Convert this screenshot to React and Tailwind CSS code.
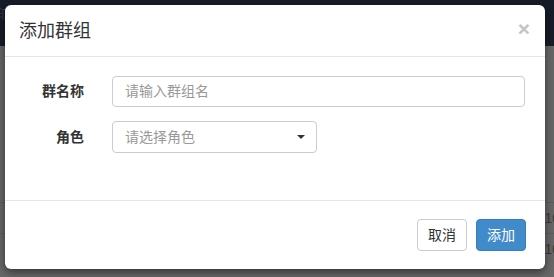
export default function App() {
  const font = { fontFamily: '"Helvetica Neue", "Liberation Sans", "Noto Sans CJK SC", sans-serif' }

  return (
    <div className="relative w-[554px] h-[277px] overflow-hidden bg-[#676767]" style={font}>
      {/* Page behind the backdrop */}
      <div className="h-[46px] bg-[#171c29] text-[#3b4252] text-[12px] pt-[6px] pl-[0px]">
        <span className="-ml-[4px]">印</span>
      </div>
      <div className="flex flex-col">
        <div className="h-[157px] border-b border-[#5c5c5c]" />
        <div className="h-[31px] border-b border-[#5c5c5c] flex items-center justify-end pr-0">
          <span className="text-[14px] text-[#3a3a3a] -mr-[6px]">10</span>
        </div>
        <div className="h-[31px] flex items-center justify-end">
          <span className="text-[14px] text-[#3a3a3a] -mr-[6px]">10</span>
        </div>
      </div>

      {/* Modal */}
      <div className="absolute left-[5px] top-[5px] w-[540px] h-[264px] bg-white rounded-[6px] shadow-[0_3px_9px_rgba(0,0,0,0.5)] flex flex-col">
        <div className="h-[52px] px-[14px] flex items-center justify-between border-b border-[#e5e5e5]">
          <h4 className="text-[18px] text-[#333] leading-none pt-[1px]">添加群组</h4>
          <span className="text-[21px] font-bold text-[#c4c4c4] leading-none mr-[1px] -mt-[4px]">×</span>
        </div>

        <div className="px-[20px] pt-[19px] flex-1 flex flex-col gap-[14px]">
          <div className="flex items-center">
            <label className="w-[59px] text-right text-[14px] font-bold text-[#333]">群名称</label>
            <div className="ml-[28px] flex-1 h-[31px] border border-[#ccc] rounded-[4px] flex items-center px-[12px] text-[14px] text-[#999]">
              请输入群组名
            </div>
          </div>
          <div className="flex items-center">
            <label className="w-[59px] text-right text-[14px] font-bold text-[#333]">角色</label>
            <div className="ml-[28px] w-[205px] h-[32px] border border-[#ccc] rounded-[4px] flex items-center justify-between pl-[12px] pr-[11px] text-[14px] text-[#999]">
              <span>请选择角色</span>
              <span className="w-0 h-0 border-l-[4px] border-r-[4px] border-t-[4px] border-l-transparent border-r-transparent border-t-[#333]" />
            </div>
          </div>
        </div>

        <div className="h-[69px] border-t border-[#e5e5e5] flex items-start justify-end gap-[9px] pt-[18px] pr-[19px]">
          <button className="w-[50px] h-[32px] border border-[#ccc] rounded-[4px] bg-white text-[14px] text-[#333]">取消</button>
          <button className="w-[50px] h-[32px] border border-[#357ebd] rounded-[4px] bg-[#428bca] text-[14px] text-white">添加</button>
        </div>
      </div>
    </div>
  )
}
